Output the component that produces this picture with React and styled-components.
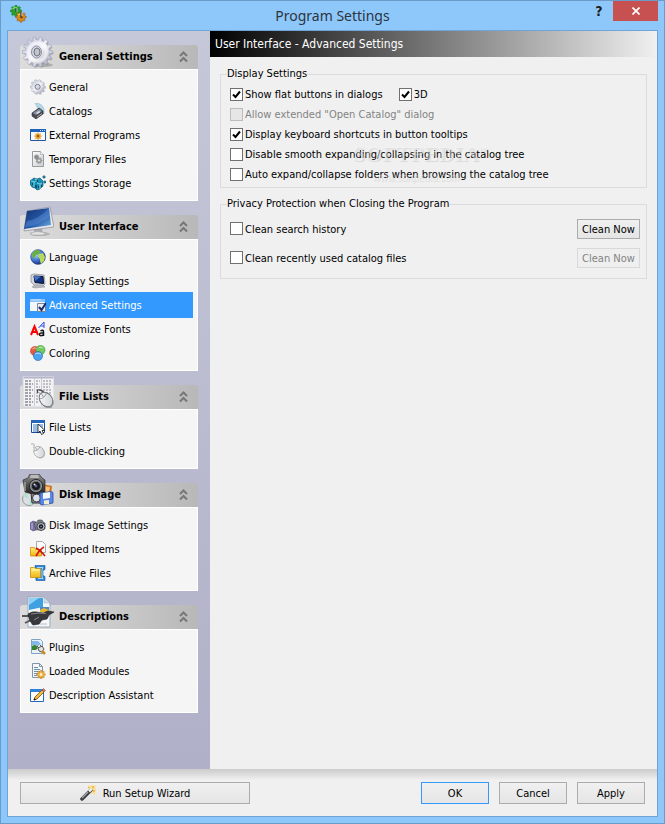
import React, { useState } from "react";
import styled, { createGlobalStyle } from "styled-components";

const GlobalStyle = createGlobalStyle`
  * {
    box-sizing: border-box;
  }

  body {
    margin: 0;
    color: #000;
    font-family: "DejaVu Sans Condensed", "DejaVu Sans", sans-serif;
    font-size: 11px;
    line-height: 16px;
  }

  button, input {
    font: inherit;
    margin: 0;
  }
`;

const Window = styled.div`
  display: flex;
  flex-direction: column;
  min-height: 100vh;
  padding: 0 6px 6px;
  border: 1px solid #6b9bc8;
  background: #8ec8fb;
`;

const TitleBar = styled.header`
  display: grid;
  grid-template-columns: 84px 1fr 84px;
  height: 29px;
`;

const TitleIcon = styled.span`
  padding: 4px 0 0 3px;
`;

const Title = styled.h1`
  margin: 0;
  color: #2c3440;
  font-family: "Noto Sans", sans-serif;
  font-size: 14px;
  font-weight: 400;
  line-height: 29px;
  text-align: center;
`;

const TitleButtons = styled.div`
  display: flex;
  align-items: flex-start;
  justify-content: flex-end;
`;

const HelpButton = styled.button`
  width: 28px;
  height: 20px;
  padding: 0;
  border: 0;
  background: transparent;
  color: #1c1c1c;
  font-size: 14px;
  font-weight: 700;
`;

const CloseButton = styled.button`
  display: flex;
  align-items: center;
  justify-content: center;
  width: 45px;
  height: 20px;
  padding: 0;
  border: 0;
  background: #c75050;
`;

const Client = styled.div`
  display: flex;
  flex: 1;
  flex-direction: column;
  border: 1px solid #70a4d6;
  background: #f0f0f0;
`;

const Content = styled.div`
  display: flex;
  flex: 1;
`;

const Sidebar = styled.nav`
  display: flex;
  flex: none;
  flex-direction: column;
  gap: 14px;
  width: 202px;
  padding: 14px 12px;
  background: linear-gradient(#c5c8d8, #b0b0c8);
`;

const Text = styled.span`
  padding-top: 2px;
`;

const GroupHeader = styled.button`
  display: flex;
  align-items: flex-end;
  gap: 5px;
  width: 100%;
  height: 24px;
  padding: 0 10px 1px 2px;
  border: 0;
  border-radius: 3px 3px 0 0;
  background: linear-gradient(90deg, #dcdcdc, #d0d0d0 40%, #b8b8b8);
  text-align: left;

  svg {
    flex: none;
  }
`;

const GroupTitle = styled.span`
  flex: 1;
  font-weight: 700;
  line-height: 23px;
`;

const Chevron = styled.svg`
  align-self: center;
`;

const GroupBody = styled.ul`
  margin: 0;
  padding: 5px 4px;
  border: 1px solid #fff;
  background: #f5f5f5;
  list-style: none;
`;

const NavItem = styled.li`
  display: flex;
  align-items: center;
  height: 24px;
`;

const NavLink = styled.a`
  display: flex;
  flex: 1;
  align-items: center;
  gap: 3px;
  height: 26px;
  padding: 0 5px;
  background: ${(props) => (props.$active ? "#3399ff" : "transparent")};
  color: ${(props) => (props.$active ? "#fff" : "#000")};
  text-decoration: none;

  svg {
    flex: none;
  }
`;

const Main = styled.main`
  flex: 1;
  min-width: 0;
`;

const PageTitle = styled.h2`
  margin: 0;
  padding: 0 5px;
  background: linear-gradient(90deg, #000, #f0f0f0);
  color: #fff;
  font-size: 12px;
  font-weight: 400;
  line-height: 26px;
`;

const Sections = styled.div`
  display: flex;
  flex-direction: column;
  gap: 8px;
  padding: 9px 10px;
`;

const Section = styled.fieldset`
  position: relative;
  min-width: 0;
  margin: 0;
  padding: 2px 6px ${(props) => props.$bottom}px 9px;
  border: 1px solid #dcdcdc;
`;

const Legend = styled.legend`
  margin-left: -3px;
  padding: 0;
`;

const OptionRow = styled.div`
  display: flex;
  align-items: center;
  justify-content: ${(props) => (props.$spread ? "space-between" : "flex-start")};
  gap: 16px;
  height: ${(props) => (props.$spread ? 29 : 20)}px;
`;

const CheckLabel = styled.label`
  display: flex;
  align-items: center;
  gap: 2px;
  color: ${(props) => (props.$disabled ? "#838383" : "#000")};
`;

const CheckBox = styled.input`
  appearance: none;
  width: 13px;
  height: 13px;
  border: 1px solid #707070;
  background: #fff;

  &:checked {
    background: #fff
      url("data:image/svg+xml,%3Csvg xmlns='http://www.w3.org/2000/svg' viewBox='0 0 11 11'%3E%3Cpath d='M2 5.5L4.5 8L9 2.5' fill='none' stroke='%23000' stroke-width='2'/%3E%3C/svg%3E");
  }

  &:disabled {
    border-color: #bcbcbc;
    background: #e6e6e6;
  }
`;

const Button = styled.button`
  display: flex;
  align-items: center;
  justify-content: center;
  gap: 7px;
  width: ${(props) => props.$width}px;
  height: ${(props) => (props.$small ? 20 : 22)}px;
  padding: 0;
  border: 1px solid ${(props) => (props.$primary ? "#3399ff" : "#acacac")};
  background: linear-gradient(#f0f0f0, #e5e5e5);
  color: #000;

  &:disabled {
    border-color: #d9d9d9;
    background: #efefef;
    color: #838383;
  }
`;

const Watermark = styled.div`
  position: absolute;
  top: 60px;
  left: 132px;
  color: rgba(250, 250, 250, 0.4);
  font-family: "Liberation Serif", serif;
  font-size: 22px;
  font-weight: 700;
  line-height: 24px;
  text-shadow: 1px 1px 1px rgba(0, 0, 0, 0.1);
  pointer-events: none;

  sup {
    font-size: 8px;
    line-height: 8px;
  }

  small {
    display: block;
    padding-left: 20px;
    font-family: "Liberation Sans", sans-serif;
    font-size: 10px;
    font-style: italic;
    font-weight: 400;
    line-height: 24px;
  }
`;

const Footer = styled.footer`
  display: flex;
  justify-content: space-between;
  padding: 13px 12px 12px;
  background: linear-gradient(#cbcbcb, #f0f0f0 11px);
`;

const ButtonGroup = styled.div`
  display: flex;
  gap: 10px;
`;

const Definitions = styled.svg`
  position: absolute;
`;

// Toothed wheel outline centred on cx, cy
const gearPath = (cx, cy, outer, inner, teeth) => {
  const points = [];
  const step = (Math.PI * 2) / teeth;
  for (let i = 0; i < teeth; i++) {
    [[-0.3, inner], [-0.2, outer], [0.2, outer], [0.3, inner]].forEach(([offset, r]) => {
      const a = (i + offset) * step;
      points.push(`${(cx + Math.cos(a) * r).toFixed(2)} ${(cy + Math.sin(a) * r).toFixed(2)}`);
    });
  }
  return `M${points.join("L")}Z`;
};

const Small = ({ children }) => (
  <svg width="16" height="16" viewBox="0 0 16 16" aria-hidden="true">
    {children}
  </svg>
);

const Big = ({ children }) => (
  <svg width="32" height="32" viewBox="0 0 32 32" aria-hidden="true">
    {children}
  </svg>
);

const Gradients = () => (
  <Definitions width="0" height="0" aria-hidden="true">
    <defs>
      <linearGradient id="steel" x2="1" y2="1">
        <stop stopColor="#b9bdd4" />
        <stop offset=".5" stopColor="#f4f4fb" />
        <stop offset="1" stopColor="#9b9fb0" />
      </linearGradient>
      <linearGradient id="screen" x2="1" y2="1">
        <stop stopColor="#16316f" />
        <stop offset=".55" stopColor="#2458a8" />
        <stop offset="1" stopColor="#79b4e6" />
      </linearGradient>
      <linearGradient id="page" x2="1" y2="1">
        <stop stopColor="#fff" />
        <stop offset="1" stopColor="#c9cdd3" />
      </linearGradient>
      <linearGradient id="folder" x2="0" y2="1">
        <stop stopColor="#fff07a" />
        <stop offset="1" stopColor="#f0b414" />
      </linearGradient>
      <linearGradient id="metal" x2="0" y2="1">
        <stop stopColor="#9a9a9a" />
        <stop offset=".5" stopColor="#555" />
        <stop offset="1" stopColor="#222" />
      </linearGradient>
      <radialGradient id="globe" cx=".35" cy=".3" r=".7">
        <stop stopColor="#c4e0ff" />
        <stop offset=".5" stopColor="#5288e0" />
        <stop offset="1" stopColor="#1b3a8c" />
      </radialGradient>
      <radialGradient id="lens">
        <stop stopColor="#8ea8d8" />
        <stop offset=".5" stopColor="#23283c" />
        <stop offset="1" stopColor="#0c0c10" />
      </radialGradient>
    </defs>
  </Definitions>
);

const AppIcon = () => (
  <svg width="18" height="18" viewBox="0 0 18 18" aria-hidden="true">
    <path d={gearPath(6, 6, 5.7, 4.4, 8)} fill="#27a02c" stroke="#13701b" strokeWidth=".5" />
    <path d="M2.500 4Q5 2 7 3" stroke="#7be06c" fill="none" strokeWidth="1.4" />
    <path d={gearPath(11, 12, 5.3, 4, 8)} fill="#d88a1c" stroke="#8a5208" strokeWidth=".5" />
    <path d="M8 10Q10 8.5 12 9" stroke="#ffcb58" fill="none" strokeWidth="1.3" />
    <circle cx="11.5" cy="12.3" r="1.3" fill="#7a4a10" />
    <path d="M6 3v4M11 7v5" stroke="#43505c" strokeWidth="1.6" />
    <path d="M7 3v4M12 7v4" stroke="#d8e0e8" strokeWidth=".7" />
  </svg>
);

const GearBig = () => (
  <Big>
    <ellipse cx="20" cy="29" rx="11" ry="2" fill="#777" opacity=".45" />
    <path d={gearPath(16.5, 17, 15, 12.4, 14)} fill="#7f8290" opacity=".5" />
    <path d={gearPath(15.5, 16, 15, 12, 14)} fill="url(#steel)" stroke="#a4a6b8" strokeWidth=".6" />
    <circle cx="15.5" cy="16" r="9" fill="none" stroke="#fff" opacity=".5" strokeWidth="3" />
    <ellipse cx="14.5" cy="16" rx="5" ry="6" fill="#d3d5e0" stroke="#9092a2" />
    <ellipse cx="15" cy="16" rx="3" ry="4" fill="#c3c5cc" stroke="#6f717c" />
  </Big>
);

const MonitorBig = () => (
  <Big>
    <ellipse cx="18" cy="28" rx="10" ry="2" fill="#666" opacity=".3" />
    <path d="M12 23h8l1 4h-9z" fill="#a8abb2" />
    <path d="M8 27q7-3 16 0l-3 2H11z" fill="#e2e3e6" stroke="#999" strokeWidth=".5" />
    <path d="M5 5L28 1L32 21L2 25Z" fill="#e4e6ea" stroke="#888c95" strokeWidth=".7" />
    <path d="M5 5L27 2L29 19L2 23Z" fill="url(#screen)" />
    <path d="M5 15Q16 14 27 2L28 10Q16 20 3 21Z" fill="#6c9fe2" opacity=".38" />
  </Big>
);

const ListBig = () => (
  <Big>
    <path d="M1 0h31v31H1z" fill="#f2f2f4" stroke="#d4d4dc" />
    <path d="M1.5 1.5h30" stroke="#b6b6cf" strokeWidth="2" />
    <path d="M3 5h7M3 8h8M3 11h6M3 14h8M3 17h7M3 20h8M3 23h6M3 26h8M3 29h7" stroke="#545460" strokeDasharray="3 1 2 1" />
    <path d="M14 5h4M14 8h3M14 11h4M14 14h3M14 17h4M14 20h3M14 23h4M14 26h3M21 5h8M21 8h9M21 11h7M21 14h9M21 17h8M21 29h8" stroke="#8a8a94" strokeDasharray="2 1" />
    <path d="M12.5 2v28M19.5 2v28" stroke="#aaa" strokeWidth=".5" />
    <path d="M16 17q-2-4 2-3t4 4" fill="none" stroke="#444" strokeWidth="1.3" />
    <ellipse cx="25" cy="25" rx="6" ry="8" transform="rotate(-38 25 25)" fill="#666" opacity=".5" />
    <ellipse cx="24" cy="23.5" rx="6" ry="8" transform="rotate(-38 24 23.5)" fill="url(#page)" stroke="#74777d" />
    <path d="M17.5 23q6-1 7-7M21.5 21l-2.500-4" stroke="#85888e" fill="none" strokeWidth=".8" />
  </Big>
);

const CameraBig = () => (
  <Big>
    <circle cx="7" cy="25" r="6.5" fill="#dbe0e3" stroke="#92979b" />
    <path d="M7 25L1 22q1-3 4-3.500zM7 25l5 4q-2 2-4 2z" fill="#b4e0cf" />
    <path d="M20 10l10 2-1 9-8 1z" fill="#c87428" />
    <path d="M22 12l6 1-1 5-5 1z" fill="#ffc176" />
    <path d="M9 19h12l2 10H10z" fill="#8a8d94" stroke="#303238" />
    <circle cx="14.5" cy="24" r="4" fill="#dde0e4" stroke="#3b3d44" />
    <path d="M1 6l5-2 2-4h9l3 4 3 2v12q-9 4-20 0z" fill="url(#metal)" stroke="#2d2d2d" strokeWidth=".7" />
    <path d="M9 1h7l1 3H8z" fill="#bbb" />
    <path d="M3 8v9" stroke="#a0a0a0" strokeWidth="1.5" />
    <circle cx="14" cy="12" r="6.5" fill="#a4a6aa" stroke="#222" />
    <circle cx="14" cy="12" r="4.8" fill="#232429" stroke="#777" />
    <circle cx="14" cy="12" r="3" fill="url(#lens)" />
    <circle cx="12.5" cy="10.5" r="1" fill="#dce8ff" />
    <path d="M18 19l11-1.500 2 1V29l-11 2-2-1z" fill="#5b86e4" stroke="#2a4fa6" strokeWidth=".8" />
    <path d="M21 19l7-1v6l-7 1z" fill="#f5f7fc" />
    <path d="M22 26.500l5-.5v4l-5 .5z" fill="#f0eed0" />
  </Big>
);

const PlugBig = () => (
  <Big>
    <path d="M6 1h16l6 6v24H6z" fill="#f6f9fc" stroke="#9ba9b6" />
    <path d="M7 2h14v9l-14 3z" fill="#3fa1e2" />
    <path d="M7 2h10L7 9z" fill="#8fd0f8" />
    <path d="M22 1v6h6z" fill="#d0deea" stroke="#9ba9b6" strokeWidth=".5" />
    <path d="M18 11h9v5h-9z" fill="#4f87c8" />
    <path d="M18 14l4-2 5 2v2h-9z" fill="#e7b72e" />
    <path d="M9 28h16" stroke="#b6bdc5" />
    <path d="M0 20h8M3 27l6-3" stroke="#555" strokeWidth="1.8" />
    <path d="M6 18q4-3 9-2l6 1 5-2 6 1-5 3-2 4-5 1-3 4-6 1-3-4-1-3z" fill="#38393b" stroke="#1c1c1c" strokeWidth=".6" />
    <path d="M9 18l7-1 8 .5M12 24l5-3" stroke="#888" fill="none" />
  </Big>
);

const GearSmall = () => (
  <Small>
    <path d={gearPath(8.5, 8.5, 7.4, 6, 10)} fill="#888b98" opacity=".5" />
    <path d={gearPath(7.6, 7.8, 7.3, 5.8, 10)} fill="url(#steel)" stroke="#a8aabb" strokeWidth=".5" />
    <circle cx="7.6" cy="7.8" r="2.5" fill="#d8dae2" stroke="#80828e" />
  </Small>
);

const CatalogIcon = () => (
  <Small>
    <path d="M5 0q7 0 9 6v5l-5-3z" fill="#b5d7ea" stroke="#89aebf" strokeWidth=".5" />
    <path d="M2 10l7-5 4 3v3l-7 5-4-3z" fill="#474b58" stroke="#292c36" strokeWidth=".6" />
    <path d="M3 10l6-4 3 2-6 4z" fill="#8991a2" />
    <path d="M6 10l3-2 1.500 1-3 2z" fill="#d8e3ee" />
    <path d="M7 14l5-3.500" stroke="#c6a68a" />
  </Small>
);

const ProgramIcon = () => (
  <Small>
    <path d="M.5 2.5h15v11H.5z" fill="#f7f9ff" stroke="#2057a4" />
    <path d="M0 2h16v3H0z" fill="#1d63bb" />
    <path d="M10 3.5h1M12 3.5h1M14 3.5h1" stroke="#b9dcff" />
    <path d={gearPath(8, 9.2, 3.8, 2.6, 8)} fill="#e89e22" />
    <circle cx="8" cy="9" r="1" fill="#68480e" />
  </Small>
);

const TempIcon = () => (
  <Small>
    <path d="M2.5.5h8l3 3v12h-11z" fill="url(#page)" stroke="#9a9a9a" />
    <path d="M10.5.5v3h3" fill="#fff" stroke="#a6a6a6" strokeWidth=".7" />
    <path d={gearPath(6.5, 6, 2.8, 2, 7)} fill="#8d8d8d" />
    <path d={gearPath(9, 9.5, 3, 2.1, 7)} fill="#aaa" stroke="#777" strokeWidth=".5" />
    <circle cx="9" cy="9.5" r=".8" fill="#fff" />
  </Small>
);

const StorageIcon = () => (
  <Small>
    <path d="M0 6l4-3 3 1 3-1 3 3v5l-3 3-3 1-2-2-3-1-2-3z" fill="#1a8fb4" stroke="#115470" strokeWidth=".7" />
    <path d="M1 6l3 1 2-1M4 7v5M7 8l3 1 2-1M10 9v5M5 4l2 1" stroke="#6fd2e7" fill="none" />
    <path d="M2 9h1M7 6h1M8 12h1M6 10v3M11 11h1" stroke="#0a303f" strokeWidth="1.3" />
    <path d="M13 1h2v2h-2zM14 6h1.500v2H14z" fill="#27a2c4" stroke="#12627f" strokeWidth=".8" />
  </Small>
);

const GlobeIcon = () => (
  <Small>
    <circle cx="8" cy="8" r="7.4" fill="url(#globe)" stroke="#2a4484" strokeWidth=".5" />
    <path d="M4 2q4-2 6 0l-1 3-3 1-2 4-2-3q0-3 2-5z" fill="#69b13c" />
    <path d="M9 5l4-1 2 4-1 4-3 3-1-3 0-2-2-2z" fill="#b4d95c" />
  </Small>
);

const DisplayIcon = () => (
  <Small>
    <path d="M1 2l3-1 10 1 1 9-2 2-9-1-3-3z" fill="#d5d6dc" stroke="#83858e" strokeWidth=".7" />
    <path d="M4 3l9 .5.5 7L5 9.500z" fill="#123184" stroke="#07112d" />
    <path d="M4 3l7 .5L5 8z" fill="#4674c8" />
    <path d="M5 12h8l2 2-10 1-3-1z" fill="#b8babf" stroke="#8b8d92" strokeWidth=".5" />
  </Small>
);

const AdvancedIcon = () => (
  <Small>
    <path d="M0 2h15v12H0z" fill="#f4f7fb" />
    <path d="M0 2h15v3H0z" fill="#86c1fa" />
    <path d="M1 3h10" stroke="#c9e5ff" />
    <path d="M7.5 6.5h8v8h-8z" fill="#e9eef5" stroke="#7b8797" />
    <path d="M9 10l2.500 3L16 6" fill="none" stroke="#172d72" strokeWidth="2" />
  </Small>
);

const FontsIcon = () => (
  <Small>
    <path d="M1 14L4.5 5.5L8 14M2.5 11h4" fill="none" stroke="#f00" strokeWidth="2" />
    <path d="M8.5 7L14 1v6M10.5 5h3.500" fill="none" stroke="#3149ec" />
    <path d="M10.5 10q3-2 3 1v4M13.500 12q-4-.5-4 1.500t4 .5" fill="none" stroke="#111" strokeWidth="1.500" />
  </Small>
);

const ColorIcon = () => (
  <Small>
    <circle cx="5" cy="6" r="4.6" fill="#e95b3e" stroke="#bb3a22" strokeWidth=".5" />
    <circle cx="10.5" cy="5" r="4.6" fill="#72c95c" stroke="#348b29" strokeWidth=".5" />
    <circle cx="8" cy="11" r="4.6" fill="#4ba3ee" stroke="#1b5da5" strokeWidth=".5" />
    <path d="M2.5 4q2-2 4-.5M9 2.500q2-1 4 .5M5 9q3-2 6 0" stroke="#fff" opacity=".6" fill="none" />
  </Small>
);

const FileListIcon = () => (
  <Small>
    <path d="M1.5 1.5h13v12h-13z" fill="#fff" stroke="#184c9f" />
    <path d="M1 1h14v3H1z" fill="#2565bb" />
    <path d="M3 6h10M3 8h10M3 10h10M3 12h8" stroke="#347bcf" />
    <path d="M8 5v9l2-2 1.500 3.500 2-1L12 11.500h3z" fill="#fff" stroke="#111" strokeWidth=".8" />
  </Small>
);

const MouseIcon = () => (
  <Small>
    <path d="M1 1q4-1 3 2t3 3" stroke="#aaa" fill="none" />
    <ellipse cx="9.8" cy="9.8" rx="5" ry="6" transform="rotate(-35 9.8 9.8)" fill="#888" opacity=".5" />
    <ellipse cx="9" cy="9" rx="5" ry="6" transform="rotate(-35 9 9)" fill="url(#page)" stroke="#aaa" strokeWidth=".8" />
    <path d="M4 8q4 0 6-4M7 7L5.500 4.500" stroke="#999" fill="none" strokeWidth=".8" />
  </Small>
);

const CameraIcon = () => (
  <Small>
    <path d="M0 6l3-2 3 1v8l-3 1-3-2z" fill="#766fa8" stroke="#4a4578" strokeWidth=".5" />
    <path d="M2 6v6" stroke="#c5bfe2" />
    <path d="M4 6l3-1 1-2h4l1 2 2 1v6l-9 1z" fill="#7b7e87" stroke="#45464d" strokeWidth=".6" />
    <circle cx="11" cy="9.5" r="4" fill="#b9bbc1" stroke="#44454a" />
    <circle cx="11" cy="9.5" r="2.2" fill="url(#lens)" />
  </Small>
);

const SkippedIcon = () => (
  <Small>
    <path d="M6.5.5h6l3 3v8h-9z" fill="#fafafa" stroke="#aaa" />
    <path d="M.5 6.5h4l1 2h6v6.500H.5z" fill="url(#folder)" stroke="#d58c0c" strokeWidth=".8" />
    <path d="M6 7q4 2 9 8M14 6q-4 2-8 9" stroke="#cf1712" strokeWidth="1.7" fill="none" />
  </Small>
);

const ArchiveIcon = () => (
  <Small>
    <path d="M5 .5h10v4l-2 1v5l2 1v4H6z" fill="#2d83d6" stroke="#155699" strokeWidth=".6" />
    <path d="M7 2.500h6l-1 2v7l1 2H8" fill="none" stroke="#a9d6fb" />
    <path d="M.5 2.500h4l1 1h5v9H.5z" fill="url(#folder)" stroke="#c99108" strokeWidth=".8" />
    <path d="M2 5h7" stroke="#fffac4" />
  </Small>
);

const PluginIcon = () => (
  <Small>
    <path d="M1.5.5h9l2 2v12h-11z" fill="#e9f2fb" stroke="#80a3c4" />
    <path d="M2 2h6l3 3-3 2-6-1z" fill="#86b9e8" />
    <path d="M2 7q4-3 6 2l-2 2H2z" fill="#38832f" />
    <path d="M7 7l2 2M10 6l2 2M8 9l4-2 2 3-2 3-3-1z" fill="#e1e2df" stroke="#5b5c54" />
    <path d="M12 12l3 3" stroke="#c58d21" strokeWidth="2.500" />
  </Small>
);

const ModulesIcon = () => (
  <Small>
    <path d="M2.5.5h7l3 3v11h-10z" fill="#f4f8fb" stroke="#8295a8" />
    <path d="M9.5.5v3h3" fill="none" stroke="#8295a8" />
    <path d="M4 4.500h4M4 6.500h6M4 8.500h6M4 10.500h4M4 12.500h3" stroke="#6f8eae" />
    <path d={gearPath(11, 11.5, 4.3, 3, 8)} fill="#f2b344" stroke="#b9770d" strokeWidth=".5" />
    <circle cx="11" cy="11.5" r="1.3" fill="#fff4dc" />
  </Small>
);

const AssistantIcon = () => (
  <Small>
    <path d="M.5 2.5h13v12H.5z" fill="#fff" stroke="#2468ba" />
    <path d="M0 2h14v3H0z" fill="#2f83dc" />
    <path d="M4 13l1-3 7-7 2 2-7 7z" fill="#f6ba36" stroke="#76541a" strokeWidth=".8" />
    <path d="M12 3l1.500-1.500 2 2L14 5z" fill="#de7564" stroke="#8c3a2d" strokeWidth=".5" />
    <path d="M4 13l.5-1.500 1 1z" stroke="#222" />
  </Small>
);

const WandIcon = () => (
  <Small>
    <path d="M8 0l2 1 2-1 1 1 3-1-1 3 1 2-1 2 0 3-3-2-2 1z" fill="#ffd777" opacity=".85" />
    <path d="M2 14L11 5" stroke="#3a3d42" strokeWidth="3.5" strokeLinecap="round" />
    <path d="M2 13L8 7" stroke="#a9adb2" strokeWidth="1.3" />
    <path d="M9 6.500l3-3" stroke="#f2efe8" strokeWidth="2.500" />
    <path d="M13 1v2M15 6h-2M8 2l1 1" stroke="#e8a52c" />
  </Small>
);

const groups = [
  {
    title: "General Settings",
    icon: <GearBig />,
    items: [
      ["General", <GearSmall />],
      ["Catalogs", <CatalogIcon />],
      ["External Programs", <ProgramIcon />],
      ["Temporary Files", <TempIcon />],
      ["Settings Storage", <StorageIcon />],
    ],
  },
  {
    title: "User Interface",
    icon: <MonitorBig />,
    items: [
      ["Language", <GlobeIcon />],
      ["Display Settings", <DisplayIcon />],
      ["Advanced Settings", <AdvancedIcon />],
      ["Customize Fonts", <FontsIcon />],
      ["Coloring", <ColorIcon />],
    ],
  },
  {
    title: "File Lists",
    icon: <ListBig />,
    items: [
      ["File Lists", <FileListIcon />],
      ["Double-clicking", <MouseIcon />],
    ],
  },
  {
    title: "Disk Image",
    icon: <CameraBig />,
    items: [
      ["Disk Image Settings", <CameraIcon />],
      ["Skipped Items", <SkippedIcon />],
      ["Archive Files", <ArchiveIcon />],
    ],
  },
  {
    title: "Descriptions",
    icon: <PlugBig />,
    items: [
      ["Plugins", <PluginIcon />],
      ["Loaded Modules", <ModulesIcon />],
      ["Description Assistant", <AssistantIcon />],
    ],
  },
];

const NavGroup = ({ title, icon, items }) => {
  const [open, setOpen] = useState(true);

  return (
    <section>
      <GroupHeader type="button" aria-expanded={open} onClick={() => setOpen(!open)}>
        {icon}
        <GroupTitle>{title}</GroupTitle>
        <Chevron width="9" height="12" viewBox="0 0 9 12" aria-hidden="true">
          <path d="M1 5L4.500 1.500L8 5M1 10.500L4.500 7L8 10.500" fill="none" stroke="#777" strokeWidth="2" />
        </Chevron>
      </GroupHeader>
      {open && (
        <GroupBody>
          {items.map(([label, itemIcon]) => (
            <NavItem key={label}>
              <NavLink href="#" $active={label === "Advanced Settings"}>
                {itemIcon}
                <Text>{label}</Text>
              </NavLink>
            </NavItem>
          ))}
        </GroupBody>
      )}
    </section>
  );
};

const Check = ({ label, checked, disabled }) => (
  <CheckLabel $disabled={disabled}>
    <CheckBox type="checkbox" defaultChecked={checked} disabled={disabled} />
    <Text>{label}</Text>
  </CheckLabel>
);

export default function App() {
  return (
    <Window>
      <GlobalStyle />
      <Gradients />
      <TitleBar>
        <TitleIcon>
          <AppIcon />
        </TitleIcon>
        <Title>Program Settings</Title>
        <TitleButtons>
          <HelpButton type="button">?</HelpButton>
          <CloseButton type="button" aria-label="Close">
            <svg width="8" height="8" viewBox="0 0 8 8" aria-hidden="true">
              <path d="M.5.5l7 7M7.5.5l-7 7" stroke="#fff" strokeWidth="1.7" />
            </svg>
          </CloseButton>
        </TitleButtons>
      </TitleBar>

      <Client>
        <Content>
          <Sidebar>
            {groups.map((group) => (
              <NavGroup key={group.title} {...group} />
            ))}
          </Sidebar>

          <Main>
            <PageTitle>User Interface - Advanced Settings</PageTitle>
            <Sections>
              <Section $bottom={3}>
                <Legend>Display Settings</Legend>
                <OptionRow>
                  <Check label="Show flat buttons in dialogs" checked />
                  <Check label="3D" checked />
                </OptionRow>
                <OptionRow>
                  <Check label={'Allow extended "Open Catalog" dialog'} disabled />
                </OptionRow>
                <OptionRow>
                  <Check label="Display keyboard shortcuts in button tooltips" checked />
                </OptionRow>
                <OptionRow>
                  <Check label="Disable smooth expanding/collapsing in the catalog tree" />
                </OptionRow>
                <OptionRow>
                  <Check label="Auto expand/collapse folders when browsing the catalog tree" />
                </OptionRow>
                <Watermark aria-hidden="true">
                  SOFTPEDIA<sup>™</sup>
                  <small>www.softpedia.com</small>
                </Watermark>
              </Section>

              <Section $bottom={6}>
                <Legend>Privacy Protection when Closing the Program</Legend>
                <OptionRow $spread>
                  <Check label="Clean search history" />
                  <Button type="button" $width={63} $small>
                    <Text>Clean Now</Text>
                  </Button>
                </OptionRow>
                <OptionRow $spread>
                  <Check label="Clean recently used catalog files" />
                  <Button type="button" $width={63} $small disabled>
                    <Text>Clean Now</Text>
                  </Button>
                </OptionRow>
              </Section>
            </Sections>
          </Main>
        </Content>

        <Footer>
          <Button type="button" $width={230}>
            <WandIcon />
            <Text>Run Setup Wizard</Text>
          </Button>
          <ButtonGroup>
            <Button type="button" $width={68} $primary>
              <Text>OK</Text>
            </Button>
            <Button type="button" $width={68}>
              <Text>Cancel</Text>
            </Button>
            <Button type="button" $width={68}>
              <Text>Apply</Text>
            </Button>
          </ButtonGroup>
        </Footer>
      </Client>
    </Window>
  );
}
